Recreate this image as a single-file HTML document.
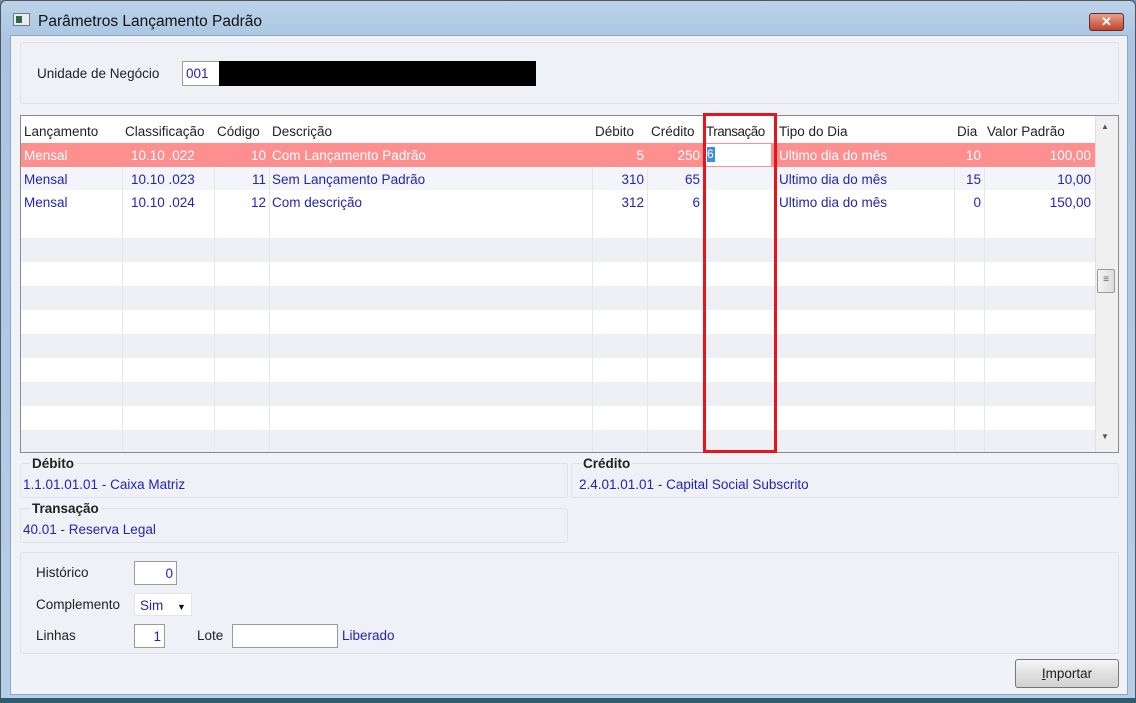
<!DOCTYPE html>
<html><head><meta charset="utf-8"><style>
*{margin:0;padding:0;box-sizing:border-box}
body{width:1136px;height:703px;overflow:hidden;background:#6d8fb5;font-family:"Liberation Sans",sans-serif;font-size:13.5px;color:#222;position:relative}
.win{position:absolute;left:0;top:0;width:1136px;height:703px;background:linear-gradient(#bcd3ea,#a9c5e3 40px,#b5cfe9);border:1px solid #555;border-radius:6px 6px 0 0}
.a{position:absolute}
.client{left:10px;top:35px;width:1118px;height:660px;background:#f0f2f7;border:1px solid #8fa6bf}
.title{left:38px;top:13px;font-size:15.5px;color:#111}
.box{background:#eff1f6;border:1px solid #dde1e8;border-radius:3px}
.blue{color:#2424b0}
.cell{position:absolute;white-space:nowrap}
.r{text-align:right}
.inp{background:#fff;border:1px solid #9a9a9a}
.ln{position:absolute;top:143px;width:1px;height:309px;background:#e4e6ec}
</style></head><body>
<div class="win"></div>
<div class="a" style="left:13px;top:13px;width:17px;height:13px;background:#e8ecf0;border:1px solid #777"><div class="a" style="left:2px;top:2px;width:6px;height:7px;background:#2a6a4a"></div></div>
<div class="a title">Parâmetros Lançamento Padrão</div>
<div class="a" style="left:1089px;top:13px;width:35px;height:18px;border-radius:3px;background:linear-gradient(#e8a090,#c0442c);border:1px solid #6a2a20;color:#fff;font-weight:bold;text-align:center;line-height:16px;font-size:13px">✕</div>
<div class="a client"></div>
<div class="a box" style="left:20px;top:42px;width:1099px;height:62px"></div>
<div class="a" style="left:37px;top:66px">Unidade de Negócio</div>
<div class="a inp blue" style="left:182px;top:61px;width:38px;height:25px;padding:4px 0 0 3px">001</div>
<div class="a" style="left:219px;top:61px;width:317px;height:25px;background:#000"></div>

<div class="a" style="left:20px;top:115px;width:1099px;height:338px;background:#fff;border:1px solid #8a8a8a"></div>
<div class="a" style="left:21px;top:214px;width:1074px;height:238px;background:repeating-linear-gradient(#fff 0 24px,#eef0f6 24px 48px)"></div>
<div class="a" style="left:21px;top:167px;width:1074px;height:23px;background:#f4f5fa"></div>
<div class="ln" style="left:122px"></div>
<div class="ln" style="left:214px"></div>
<div class="ln" style="left:269px"></div>
<div class="ln" style="left:592px"></div>
<div class="ln" style="left:647px"></div>
<div class="ln" style="left:776px"></div>
<div class="ln" style="left:954px"></div>
<div class="ln" style="left:984px"></div>
<div class="a" style="left:21px;top:143px;width:1074px;height:24px;background:#fd8f8f"></div>
<div class="a" style="left:1095px;top:116px;width:23px;height:336px;background:#f0f0f0;border-left:1px solid #e0e0e0"></div>
<div class="a" style="left:1101px;top:122px;font-size:8px;color:#555">▲</div>
<div class="a" style="left:1101px;top:432px;font-size:8px;color:#555">▼</div>
<div class="a" style="left:1097px;top:269px;width:18px;height:24px;background:linear-gradient(90deg,#f4f4f4,#dcdcdc);border:1px solid #999;border-radius:2px;text-align:center;font-size:10px;line-height:20px;color:#666">≡</div>
<div class="cell" style="left:24px;top:124px">Lançamento</div>
<div class="cell" style="left:125px;top:124px">Classificação</div>
<div class="cell" style="left:217px;top:124px">Código</div>
<div class="cell" style="left:272px;top:124px">Descrição</div>
<div class="cell" style="left:595px;top:124px">Débito</div>
<div class="cell" style="left:651px;top:124px">Crédito</div>
<div class="cell" style="left:706px;top:124px;letter-spacing:-0.5px">Transação</div>
<div class="cell" style="left:779px;top:124px">Tipo do Dia</div>
<div class="cell" style="left:957px;top:124px">Dia</div>
<div class="cell" style="left:987px;top:124px">Valor Padrão</div>
<div style="color:#fff">
<div class="cell" style="left:24px;top:148px">Mensal</div>
<div class="cell" style="left:131px;top:148px">10.10 .022</div>
<div class="cell r" style="left:214px;top:148px;width:52px">10</div>
<div class="cell" style="left:272px;top:148px">Com Lançamento Padrão</div>
<div class="cell r" style="left:592px;top:148px;width:52px">5</div>
<div class="cell r" style="left:647px;top:148px;width:53px">250</div>
<div class="cell" style="left:779px;top:148px">Ultimo dia do mês</div>
<div class="cell r" style="left:954px;top:148px;width:27px">10</div>
<div class="cell r" style="left:984px;top:148px;width:107px">100,00</div>
</div>
<div class="a" style="left:705px;top:144px;width:66px;height:22px;background:#fff"></div>
<div class="a" style="left:707px;top:147px;width:8px;height:15px;background:#3d8ee8;color:#fff;font-size:12px;line-height:15px">6</div>
<div class="blue">
<div class="cell" style="left:24px;top:172px">Mensal</div>
<div class="cell" style="left:131px;top:172px">10.10 .023</div>
<div class="cell r" style="left:214px;top:172px;width:52px">11</div>
<div class="cell" style="left:272px;top:172px">Sem Lançamento Padrão</div>
<div class="cell r" style="left:592px;top:172px;width:52px">310</div>
<div class="cell r" style="left:647px;top:172px;width:53px">65</div>
<div class="cell" style="left:779px;top:172px">Ultimo dia do mês</div>
<div class="cell r" style="left:954px;top:172px;width:27px">15</div>
<div class="cell r" style="left:984px;top:172px;width:107px">10,00</div>
<div class="cell" style="left:24px;top:195px">Mensal</div>
<div class="cell" style="left:131px;top:195px">10.10 .024</div>
<div class="cell r" style="left:214px;top:195px;width:52px">12</div>
<div class="cell" style="left:272px;top:195px">Com descrição</div>
<div class="cell r" style="left:592px;top:195px;width:52px">312</div>
<div class="cell r" style="left:647px;top:195px;width:53px">6</div>
<div class="cell" style="left:779px;top:195px">Ultimo dia do mês</div>
<div class="cell r" style="left:954px;top:195px;width:27px">0</div>
<div class="cell r" style="left:984px;top:195px;width:107px">150,00</div>
</div>
<div class="a" style="left:703px;top:113px;width:74px;height:340px;border:3px solid #e8141c"></div>

<div class="a box" style="left:20px;top:463px;width:548px;height:35px"></div>
<div class="a box" style="left:571px;top:463px;width:548px;height:35px"></div>
<div class="a box" style="left:20px;top:508px;width:548px;height:35px"></div>
<div class="a" style="left:30px;top:456px;font-weight:bold;font-size:13.5px;background:#f0f2f7;padding:0 2px">Débito</div>
<div class="a blue" style="left:23px;top:477px">1.1.01.01.01 - Caixa Matriz</div>
<div class="a" style="left:581px;top:456px;font-weight:bold;font-size:13.5px;background:#f0f2f7;padding:0 2px">Crédito</div>
<div class="a blue" style="left:579px;top:477px">2.4.01.01.01 - Capital Social Subscrito</div>
<div class="a" style="left:30px;top:501px;font-weight:bold;font-size:13.5px;background:#f0f2f7;padding:0 2px">Transação</div>
<div class="a blue" style="left:23px;top:522px">40.01 - Reserva Legal</div>

<div class="a box" style="left:20px;top:552px;width:1099px;height:102px"></div>
<div class="a" style="left:36px;top:565px">Histórico</div>
<div class="a inp blue r" style="left:134px;top:561px;width:43px;height:24px;padding:4px 3px 0 0">0</div>
<div class="a" style="left:36px;top:597px">Complemento</div>
<div class="a blue" style="left:134px;top:593px;width:58px;height:23px;background:#fff;border:1px solid #e4e4e4;padding:4px 0 0 5px">Sim <span style="color:#111;font-size:9px;margin-left:10px">▼</span></div>
<div class="a" style="left:36px;top:628px">Linhas</div>
<div class="a inp blue r" style="left:134px;top:624px;width:31px;height:24px;padding:4px 3px 0 0">1</div>
<div class="a" style="left:197px;top:628px">Lote</div>
<div class="a inp" style="left:232px;top:624px;width:106px;height:24px"></div>
<div class="a blue" style="left:342px;top:628px">Liberado</div>

<div class="a" style="left:1015px;top:659px;width:104px;height:29px;border:1px solid #777;border-radius:3px;background:linear-gradient(#f6f6f6,#e0e0e0 50%,#d2d2d2);text-align:center;line-height:27px;font-size:13.5px"><u>I</u>mportar</div>
<div class="a" style="left:0;top:698px;width:1136px;height:5px;background:#2f5b6e"></div>
</body></html>
